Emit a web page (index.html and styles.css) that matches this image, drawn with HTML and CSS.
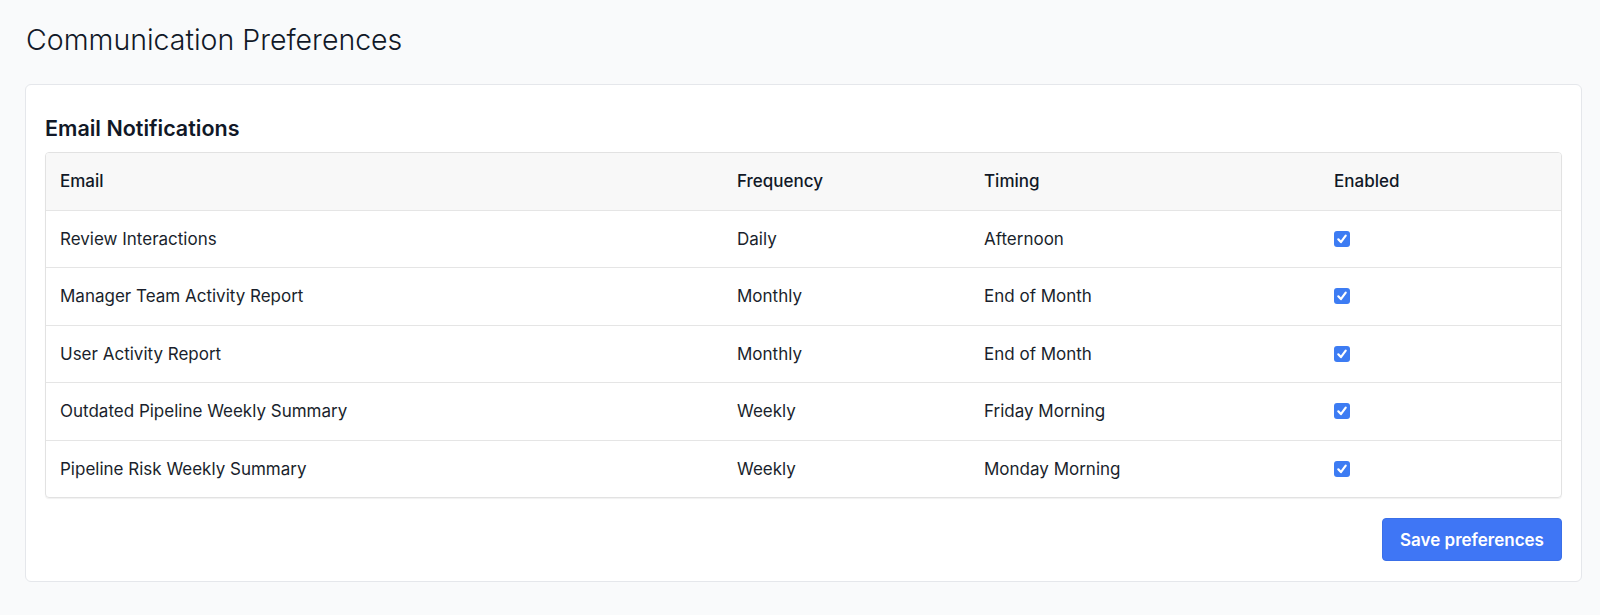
FILE: index.html
```html
<!DOCTYPE html>
<html lang="en">
<head>
<meta charset="utf-8">
<title>Communication Preferences</title>
<link rel="stylesheet" href="styles.css">
</head>
<body>
<main class="page">
  <h1 class="page-title">Communication Preferences</h1>
  <section class="card">
    <h2 class="card-title">Email Notifications</h2>
    <div class="table-wrap">
      <table class="prefs">
        <colgroup>
          <col class="c-email"><col class="c-freq"><col class="c-timing"><col class="c-enabled">
        </colgroup>
        <thead>
          <tr><th>Email</th><th>Frequency</th><th>Timing</th><th>Enabled</th></tr>
        </thead>
        <tbody>
          <tr><td>Review Interactions</td><td>Daily</td><td>Afternoon</td><td><span class="check"><svg viewBox="0 0 16 16" width="16" height="16"><path d="M4.3 8.3 L6.9 11.1 L11.7 4.7" fill="none" stroke="#fff" stroke-width="2.2" stroke-linecap="round" stroke-linejoin="round"/></svg></span></td></tr>
          <tr><td>Manager Team Activity Report</td><td>Monthly</td><td>End of Month</td><td><span class="check"><svg viewBox="0 0 16 16" width="16" height="16"><path d="M4.3 8.3 L6.9 11.1 L11.7 4.7" fill="none" stroke="#fff" stroke-width="2.2" stroke-linecap="round" stroke-linejoin="round"/></svg></span></td></tr>
          <tr><td>User Activity Report</td><td>Monthly</td><td>End of Month</td><td><span class="check"><svg viewBox="0 0 16 16" width="16" height="16"><path d="M4.3 8.3 L6.9 11.1 L11.7 4.7" fill="none" stroke="#fff" stroke-width="2.2" stroke-linecap="round" stroke-linejoin="round"/></svg></span></td></tr>
          <tr><td>Outdated Pipeline Weekly Summary</td><td>Weekly</td><td>Friday Morning</td><td><span class="check"><svg viewBox="0 0 16 16" width="16" height="16"><path d="M4.3 8.3 L6.9 11.1 L11.7 4.7" fill="none" stroke="#fff" stroke-width="2.2" stroke-linecap="round" stroke-linejoin="round"/></svg></span></td></tr>
          <tr><td>Pipeline Risk Weekly Summary</td><td>Weekly</td><td>Monday Morning</td><td><span class="check"><svg viewBox="0 0 16 16" width="16" height="16"><path d="M4.3 8.3 L6.9 11.1 L11.7 4.7" fill="none" stroke="#fff" stroke-width="2.2" stroke-linecap="round" stroke-linejoin="round"/></svg></span></td></tr>
        </tbody>
      </table>
    </div>
    <div class="actions">
      <button class="btn-primary" type="button">Save preferences</button>
    </div>
  </section>
</main>
</body>
</html>
```
FILE: styles.css
```css
* { box-sizing: border-box; }
html, body { margin: 0; padding: 0; }
body {
  background: #f9fafb;
  font-family: Inter, "Noto Sans", "Liberation Sans", sans-serif;
  color: #111827;
}
.page {
  padding: 22px 18px 30px 25px;
}
.page-title {
  margin: 0 0 26px;
  font-size: 28.5px;
  line-height: 36px;
  font-weight: 300;
  color: #111827;
  padding-left: 1px;
}
.card {
  background: #fff;
  border: 1px solid #e5e7eb;
  border-radius: 6px;
  padding: 19px 19px 20px;
}
.card-title {
  margin: 10px 0 10px;
  font-size: 21.5px;
  line-height: 28px;
  font-weight: 600;
  color: #111827;
}
.table-wrap {
  border: 1px solid #e2e2e2;
  border-radius: 4px;
  overflow: hidden;
  box-shadow: 0 1px 1px rgba(0,0,0,0.06);
}
.prefs {
  width: 100%;
  border-collapse: separate;
  border-spacing: 0;
  table-layout: fixed;
  font-size: 17px;
  line-height: 24px;
}
.c-email { width: 677px; }
.c-freq { width: 247px; }
.c-timing { width: 350px; }
.prefs th {
  text-align: left;
  font-weight: 500;
  background: #f8f8f8;
  padding: 16.25px 14px;
  color: #111827;
}
.prefs td {
  padding: 16.25px 14px;
  border-top: 1px solid #e5e5e5;
  color: #1a1f2c;
  vertical-align: middle;
}
.check {
  display: block;
  width: 16px;
  height: 16px;
  border-radius: 3px;
  background: #3d7cf3;
}
.check svg { display: block; }
.actions {
  display: flex;
  justify-content: flex-end;
  margin-top: 20px;
}
.btn-primary {
  font-family: inherit;
  font-size: 17px;
  font-weight: 600;
  line-height: 24px;
  color: #fff;
  background: #3f76f5;
  border: 1px solid #3a6fe8;
  border-radius: 4px;
  width: 180px;
  height: 43px;
  padding: 0;
  cursor: pointer;
}
```
